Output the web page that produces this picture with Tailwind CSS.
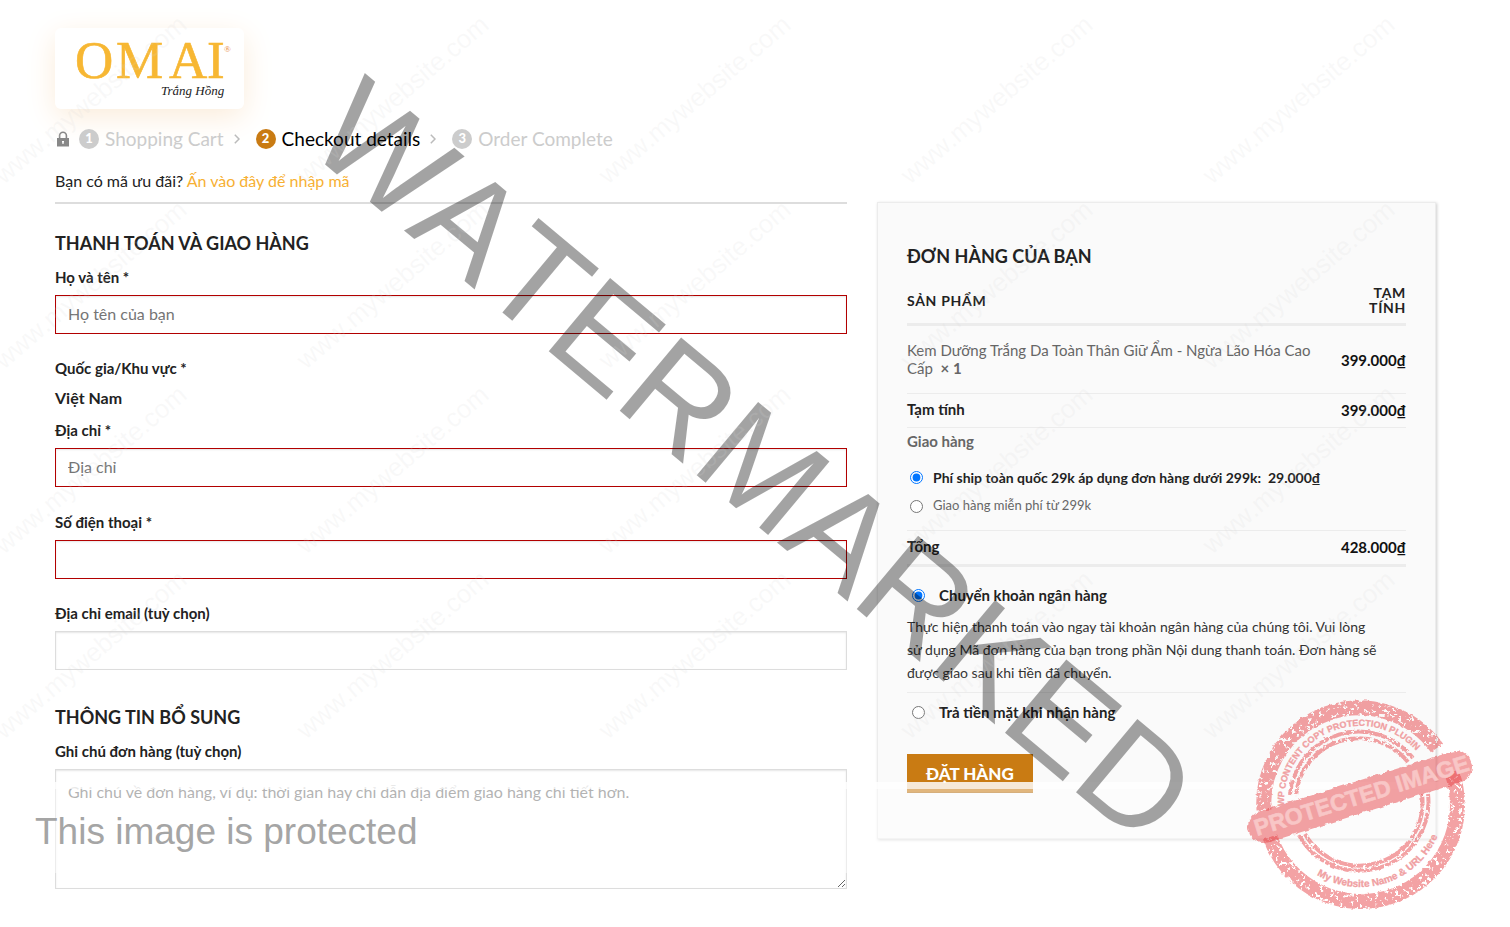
<!DOCTYPE html>
<html lang="vi">
<head>
    <meta charset="UTF-8">
    <meta name="viewport" content="width=device-width, initial-scale=1.0">
    <title>Thanh toán - OMAI</title>
    <script src="https://cdn.jsdelivr.net/npm/@tailwindcss/browser@4"></script>
</head>
<body class="relative min-h-screen overflow-x-hidden bg-white font-['Lato',sans-serif] text-[#222]">
    <div class="pt-7 pl-[55px] pr-[74px] pb-9">
        <header>
            <a href="#" class="block w-[189px] rounded-md bg-white shadow-[0_8px_30px_#fbecda]">
                <svg class="block w-full" viewBox="0 0 189 81" role="img" aria-label="OMAI Trắng Hồng">
                    <text x="20 61 114 152" y="50" font-family="Liberation Serif, serif" font-size="53" fill="#f7b733" stroke="#f7b733" stroke-width="0.6">OMAI</text>
                    <text x="169" y="24" font-family="Liberation Serif, serif" font-size="9" fill="#e8893a">®</text>
                    <text x="106" y="67" font-family="Liberation Serif, serif" font-size="13" font-style="italic" fill="#222">Trắng Hồng</text>
                </svg>
            </a>
            <nav class="mt-4 flex h-7 items-center text-[19px] text-[#ccc]">
                <svg class="ml-0.5 mr-2.5 h-4 w-3" viewBox="0 0 12 16" fill="none">
                    <path d="M2.6 8V4.6a3.4 3.4 0 0 1 6.8 0V8" stroke="#888" stroke-width="1.6"/>
                    <path d="M0 7h12v8.5H0z" fill="#888"/>
                    <path d="M5 10h2v1.4h-.4V13H5.400v-1.600H5z" fill="#fff"/>
                </svg>
                <a href="#" class="flex items-center gap-1.5">
                    <span class="flex size-5 items-center justify-center rounded-full bg-[#ccc] text-[13px] font-black text-white">1</span>
                    Shopping Cart
                </a>
                <svg class="ml-2.5 mr-4 h-2.5 w-1.5" viewBox="0 0 6 10" fill="none" stroke="#bbb" stroke-width="1.5"><path d="M.8.8 5 5 .8 9.200"/></svg>
                <a href="#" class="flex items-center gap-1.5 text-black">
                    <span class="flex size-5 items-center justify-center rounded-full bg-[#c97b13] text-[13px] font-black text-white">2</span>
                    Checkout details
                </a>
                <svg class="ml-2.5 mr-4 h-2.5 w-1.5" viewBox="0 0 6 10" fill="none" stroke="#bbb" stroke-width="1.5"><path d="M.8.8 5 5 .8 9.200"/></svg>
                <a href="#" class="flex items-center gap-1.5">
                    <span class="flex size-5 items-center justify-center rounded-full bg-[#ccc] text-[13px] font-black text-white">3</span>
                    Order Complete
                </a>
            </nav>
        </header>

        <p class="mt-4 text-base leading-6">Bạn có mã ưu đãi? <a href="#" class="text-[#f7b033]">Ấn vào đây để nhập mã</a></p>

        <form class="mt-[9px] grid grid-cols-[792fr_559fr] items-start gap-[30px]" onsubmit="return false">
            <!-- Billing -->
            <div class="border-t-2 border-[#ddd] pt-[25px]">
                <h3 class="text-lg font-bold leading-7">THANH TOÁN VÀ GIAO HÀNG</h3>

                <label for="name" class="mt-2 block text-[15px] font-bold leading-6">Họ và tên *</label>
                <input id="name" type="text" placeholder="Họ tên của bạn" class="mt-1.5 block h-[39px] w-full border border-[#b20000] bg-white px-3 pb-0.5 text-base shadow-[inset_0_1px_2px_rgba(0,0,0,0.1)] outline-none placeholder:text-[#757575]">

                <p class="mt-[22px] text-[15px] font-bold leading-6">Quốc gia/Khu vực *</p>
                <p class="mt-1.5 text-base font-bold leading-6">Việt Nam</p>

                <label for="address" class="mt-2 block text-[15px] font-bold leading-6">Địa chỉ *</label>
                <input id="address" type="text" placeholder="Địa chỉ" class="mt-1.5 block h-[39px] w-full border border-[#b20000] bg-white px-3 pb-0.5 text-base shadow-[inset_0_1px_2px_rgba(0,0,0,0.1)] outline-none placeholder:text-[#757575]">

                <label for="phone" class="mt-[23px] block text-[15px] font-bold leading-6">Số điện thoại *</label>
                <input id="phone" type="tel" class="mt-1.5 block h-[39px] w-full border border-[#b20000] bg-white px-3 text-base shadow-[inset_0_1px_2px_rgba(0,0,0,0.1)] outline-none">

                <label for="email" class="mt-[22px] block text-[15px] font-bold leading-6">Địa chỉ email (tuỳ chọn)</label>
                <input id="email" type="email" class="mt-1.5 block h-[39px] w-full border border-[#ddd] bg-white px-3 text-base shadow-[inset_0_1px_2px_rgba(0,0,0,0.1)] outline-none">

                <h3 class="mt-[33px] text-lg font-bold leading-7">THÔNG TIN BỔ SUNG</h3>

                <label for="note" class="mt-2 block text-[15px] font-bold leading-6">Ghi chú đơn hàng (tuỳ chọn)</label>
                <textarea id="note" placeholder="Ghi chú về đơn hàng, ví dụ: thời gian hay chỉ dẫn địa điểm giao hàng chi tiết hơn." class="mt-1.5 block h-[120px] w-full resize border border-[#ddd] bg-white px-3 py-2.5 text-base shadow-[inset_0_1px_2px_rgba(0,0,0,0.1)] outline-none placeholder:text-[#757575]"></textarea>
            </div>

            <!-- Order review -->
            <div class="border border-[#ececec] bg-[#fafafa] px-[29px] pt-[39px] pb-[45px] shadow-[1px_1px_3px_rgba(0,0,0,0.2)]">
                <h3 class="text-lg font-bold leading-7">ĐƠN HÀNG CỦA BẠN</h3>
                <table class="mt-[7px] w-full border-separate border-spacing-0 text-[15px]">
                    <thead>
                        <tr class="text-[14px] leading-[15px]">
                            <th class="border-b-3 border-[#ececec] py-2 text-left font-bold tracking-wider">SẢN PHẨM</th>
                            <th class="w-[88px] border-b-3 border-[#ececec] py-2 text-right font-bold tracking-wider">TẠM<br>TÍNH</th>
                        </tr>
                    </thead>
                    <tbody>
                        <tr class="leading-[18px]">
                            <td class="border-b border-[#ececec] pt-[15px] pb-4 text-[#666]">Kem Dưỡng Trắng Da Toàn Thân Giữ Ẩm - Ngừa Lão Hóa Cao Cấp&nbsp; <strong>× 1</strong></td>
                            <td class="border-b border-[#ececec] text-right font-bold text-[#111]">399.000₫</td>
                        </tr>
                        <tr class="h-[34px]">
                            <th class="border-b border-[#ececec] pb-0.5 text-left">Tạm tính</th>
                            <td class="border-b border-[#ececec] text-right font-bold text-[#111]">399.000₫</td>
                        </tr>
                        <tr>
                            <td colspan="2" class="border-b border-[#ececec] pb-3">
                                <p class="font-bold leading-[26px] text-[#666]">Giao hàng</p>
                                <label class="mt-[11px] flex h-6 items-center gap-2.5 pl-[3px] text-[14px] font-bold">
                                    <input type="radio" name="shipping" checked class="size-[13px]">
                                    <span>Phí ship toàn quốc 29k áp dụng đơn hàng dưới 299k:&nbsp; 29.000₫</span>
                                </label>
                                <label class="mt-[5px] flex h-6 items-center gap-2.5 pl-[3px] text-[13px] text-[#666]">
                                    <input type="radio" name="shipping" class="size-[13px]">
                                    <span>Giao hàng miễn phí từ 299k</span>
                                </label>
                            </td>
                        </tr>
                        <tr class="h-9">
                            <th class="border-b-3 border-[#ececec] pb-0.5 text-left">Tổng</th>
                            <td class="border-b-3 border-[#ececec] text-right font-bold text-[#111]">428.000₫</td>
                        </tr>
                    </tbody>
                </table>

                <div class="border-b border-[#ececec] pt-4 pb-2">
                    <label class="flex h-6 items-center gap-3.5 pl-[5px] text-[15px] font-bold">
                        <input type="radio" name="payment" checked class="size-[13px]">
                        Chuyển khoản ngân hàng
                    </label>
                    <p class="mt-2 text-[14px] leading-[23px] text-[#333]">Thực hiện thanh toán vào ngay tài khoản ngân hàng của chúng tôi. Vui lòng<br>sử dụng Mã đơn hàng của bạn trong phần Nội dung thanh toán. Đơn hàng sẽ<br>được giao sau khi tiền đã chuyển.</p>
                </div>
                <label class="mt-[7px] flex h-6 items-center gap-3.5 pl-[5px] text-[15px] font-bold">
                    <input type="radio" name="payment" class="size-[13px]">
                    Trả tiền mặt khi nhận hàng
                </label>
                <button type="submit" class="mt-[30px] block h-[39px] bg-[#c97b13] px-[19px] text-[17px] font-black text-white shadow-[inset_0_-1px_0_rgba(0,0,0,0.1)]">ĐẶT HÀNG</button>
            </div>
        </form>
    </div>

    <!-- Copy protection layer over the page -->
    <svg class="pointer-events-none absolute left-0 top-0 h-[927px] w-[1510px]" viewBox="0 0 1510 927" aria-hidden="true">
        <defs>
            <g id="marks" class="[font-kerning:none]" font-family="Liberation Sans, sans-serif" font-size="26" fill="#d8d8d8" fill-opacity="0.16">
                <text transform="translate(4 185) rotate(-40.5)">www.mywebsite.com</text>
                <text transform="translate(306 185) rotate(-40.5)">www.mywebsite.com</text>
                <text transform="translate(608 185) rotate(-40.5)">www.mywebsite.com</text>
                <text transform="translate(910 185) rotate(-40.5)">www.mywebsite.com</text>
                <text transform="translate(1212 185) rotate(-40.5)">www.mywebsite.com</text>
            </g>
            <filter id="grain" filterUnits="userSpaceOnUse" x="1240" y="690" width="240" height="230" color-interpolation-filters="sRGB">
                <feTurbulence type="fractalNoise" baseFrequency="0.25" numOctaves="2" seed="7" result="noise"/>
                <feColorMatrix in="noise" values="0 0 0 0 0  0 0 0 0 0  0 0 0 0 0  14 0 0 0 -4.900" result="holes"/>
                <feComposite in="SourceGraphic" in2="holes" operator="in" result="cut"/>
                <feDisplacementMap in="cut" in2="noise" scale="3" xChannelSelector="R" yChannelSelector="G"/>
            </filter>
            <filter id="rough" filterUnits="userSpaceOnUse" x="1240" y="690" width="240" height="230" color-interpolation-filters="sRGB">
                <feTurbulence type="fractalNoise" baseFrequency="0.2" numOctaves="2" seed="3" result="noise"/>
                <feDisplacementMap in="SourceGraphic" in2="noise" scale="4" xChannelSelector="R" yChannelSelector="G"/>
            </filter>
            <path id="arc-top" d="M1284 806a76 76 0 0 1 152-8"/>
            <path id="arc-bottom" d="M1317 875A84 84 0 0 0 1443 818"/>
        </defs>

        <path d="M0 782h1510v7H0z" fill="#fff" fill-opacity="0.7"/>
        <path d="M0 782h1510v91H0z" fill="#fff" fill-opacity="0.45"/>

        <text class="[font-kerning:none]" transform="translate(303 146) rotate(39.9)" font-family="Liberation Sans, sans-serif" font-size="139" fill="#000" fill-opacity="0.36">WATERMARKED</text>
        <use href="#marks"/>
        <use href="#marks" y="185"/>
        <use href="#marks" y="370"/>
        <use href="#marks" y="555"/>
        <text x="35" y="844" font-family="Liberation Sans, sans-serif" font-size="37" fill="#a5a5a5">This image is protected</text>

        <g fill="none" stroke="#e53c40" stroke-opacity="0.48">
            <g filter="url(#grain)" transform="translate(-1 -2)">
                <path d="M1265 812A95.500 95.500 0 0 1 1438 750" stroke-width="15"/>
                <path d="M1453 775A95.500 95.500 0 0 1 1271 839" stroke-width="15"/>
                <path d="M1291 797A69 69 0 0 1 1414 760M1429 796A69 69 0 0 1 1300 837" stroke-width="4"/>
                <path d="M1297 797A63 63 0 0 1 1409 764M1423 796A63 63 0 0 1 1306 836" stroke-width="4"/>
            </g>
            <path d="M1264 827 1456 767" stroke-width="32" stroke-linecap="round" filter="url(#rough)"/>
        </g>
        <text transform="translate(1257 836) rotate(-17.2)" font-family="Liberation Sans, sans-serif" font-size="23" font-weight="bold" fill="#f8c6c6" stroke="#f8c6c6" stroke-width="0.6">PROTECTED IMAGE</text>
        <g font-family="Liberation Sans, sans-serif" font-weight="bold" fill="#f0a0a2" stroke="#f0a0a2" stroke-width="0.3">
            <text font-size="9"><textPath href="#arc-top">WP CONTENT COPY PROTECTION PLUGIN</textPath></text>
            <text font-size="10"><textPath href="#arc-bottom">My Website Name &amp; URL Here</textPath></text>
        </g>
    </svg>
</body>
</html>
